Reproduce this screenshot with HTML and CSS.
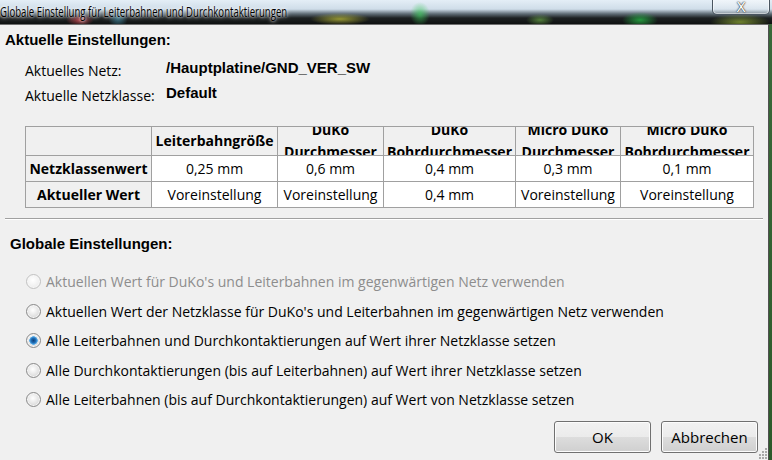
FILE: index.html
```html
<!DOCTYPE html>
<html lang="de">
<head>
    <meta charset="UTF-8">
    <title>Globale Einstellung für Leiterbahnen und Durchkontaktierungen</title>
    <link rel="stylesheet" href="styles.css">
</head>
<body>
    <div class="window">
        <!-- Titelleiste -->
        <div class="titlebar">
            <span class="title">Globale Einstellung für Leiterbahnen und Durchkontaktierungen</span>
            <div class="close-btn">X</div>
        </div>

        <div class="dialog">
            <h2 class="group-title">Aktuelle Einstellungen:</h2>

            <div class="info">
                <span class="info-label">Aktuelles Netz:</span>
                <span class="info-value">/Hauptplatine/GND_VER_SW</span>
                <span class="info-label">Aktuelle Netzklasse:</span>
                <span class="info-value">Default</span>
            </div>

            <table class="values">
                <colgroup>
                    <col style="width:126px">
                    <col style="width:126px">
                    <col style="width:106px">
                    <col style="width:132px">
                    <col style="width:105px">
                    <col style="width:133px">
                </colgroup>
                <tr class="head">
                    <th></th>
                    <th><div class="clip">Leiterbahngröße</div></th>
                    <th><div class="clip">DuKo<br>Durchmesser</div></th>
                    <th><div class="clip">DuKo<br>Bohrdurchmesser</div></th>
                    <th><div class="clip">Micro DuKo<br>Durchmesser</div></th>
                    <th><div class="clip">Micro DuKo<br>Bohrdurchmesser</div></th>
                </tr>
                <tr>
                    <th>Netzklassenwert</th>
                    <td>0,25 mm</td>
                    <td>0,6 mm</td>
                    <td>0,4 mm</td>
                    <td>0,3 mm</td>
                    <td>0,1 mm</td>
                </tr>
                <tr>
                    <th>Aktueller Wert</th>
                    <td>Voreinstellung</td>
                    <td>Voreinstellung</td>
                    <td>0,4 mm</td>
                    <td>Voreinstellung</td>
                    <td>Voreinstellung</td>
                </tr>
            </table>

            <div class="separator"></div>

            <h2 class="group-title global">Globale Einstellungen:</h2>

            <ul class="options">
                <li class="disabled"><span class="radio"></span>Aktuellen Wert für DuKo's und Leiterbahnen im gegenwärtigen Netz verwenden</li>
                <li><span class="radio"></span>Aktuellen Wert der Netzklasse für DuKo's und Leiterbahnen im gegenwärtigen Netz verwenden</li>
                <li><span class="radio checked"></span>Alle Leiterbahnen und Durchkontaktierungen auf Wert ihrer Netzklasse setzen</li>
                <li><span class="radio"></span>Alle Durchkontaktierungen (bis auf Leiterbahnen) auf Wert ihrer Netzklasse setzen</li>
                <li><span class="radio"></span>Alle Leiterbahnen (bis auf Durchkontaktierungen) auf Wert von Netzklasse setzen</li>
            </ul>

            <div class="buttons">
                <button class="btn">OK</button>
                <button class="btn">Abbrechen</button>
            </div>

            <svg class="grip" width="11" height="11" viewBox="0 0 11 11">
                <rect x="8" y="0" width="2" height="2" fill="#a8a8a8"/>
                <rect x="5" y="3" width="2" height="2" fill="#a8a8a8"/>
                <rect x="8" y="3" width="2" height="2" fill="#a8a8a8"/>
                <rect x="2" y="6" width="2" height="2" fill="#a8a8a8"/>
                <rect x="5" y="6" width="2" height="2" fill="#a8a8a8"/>
                <rect x="8" y="6" width="2" height="2" fill="#a8a8a8"/>
                <rect x="2" y="9" width="2" height="2" fill="#a8a8a8"/>
                <rect x="5" y="9" width="2" height="2" fill="#a8a8a8"/>
                <rect x="8" y="9" width="2" height="2" fill="#a8a8a8"/>
            </svg>
        </div>
    </div>
</body>
</html>
```

FILE: styles.css
```css
body {
    margin: 0;
    padding: 0;
    width: 772px;
    height: 460px;
    overflow: hidden;
    background: linear-gradient(#3a6a3a, #2d5a2a);
    font-family: "Open Sans", "Noto Sans", sans-serif;
    color: #000000;
}

.window {
    width: 772px;
    height: 460px;
    display: flex;
    flex-direction: column;
}

/* Aero-Titelleiste */
.titlebar {
    position: relative;
    height: 24px;
    flex: none;
    background:
        radial-gradient(ellipse 14px 6px at 80px 20px, rgba(210, 70, 80, 0.8), transparent),
        radial-gradient(ellipse 10px 10px at 118px 18px, rgba(80, 170, 200, 0.6), transparent),
        radial-gradient(ellipse 30px 6px at 340px 19px, rgba(200, 200, 60, 0.7), transparent),
        radial-gradient(ellipse 10px 12px at 420px 14px, rgba(60, 200, 90, 0.7), transparent),
        radial-gradient(ellipse 14px 6px at 540px 20px, rgba(120, 190, 80, 0.6), transparent),
        radial-gradient(ellipse 18px 8px at 640px 20px, rgba(40, 180, 70, 0.8), transparent),
        radial-gradient(ellipse 30px 8px at 740px 22px, rgba(170, 200, 60, 0.6), transparent),
        linear-gradient(#e4eef6 0, #cfdde9 38%, #5e6b74 58%, #1d2122 75%, #0f1211 100%);
}

.title {
    display: inline-block;
    font-family: "Open Sans", sans-serif;
    font-size: 15px;
    line-height: 18px;
    white-space: nowrap;
    transform: scaleX(0.64);
    transform-origin: left center;
    color: #000000;
    text-shadow: 0 0 6px #ffffff, 0 0 3px #ffffff;
}

.close-btn {
    position: absolute;
    right: 2px;
    top: -3px;
    width: 56px;
    height: 17px;
    border: 1px solid #4a5560;
    border-top: none;
    border-radius: 0 0 5px 5px;
    background: linear-gradient(rgba(255, 255, 255, 0.55), rgba(220, 230, 240, 0.3));
    box-shadow: inset 0 0 0 1px rgba(255, 255, 255, 0.5);
    text-align: center;
    font-family: "DejaVu Sans", sans-serif;
    font-size: 14px;
    line-height: 20px;
    color: #ffffff;
    text-shadow: 0 0 2px #333333, 0 0 1px #000000;
}

/* Dialoginhalt */
.dialog {
    position: relative;
    flex: 1;
    width: 768px;
    background-color: #f0f0f0;
    border-top: 1px solid #6f6f6f;
    border-right: 1px solid #505050;
}

.group-title {
    font-family: "Liberation Sans", Arial, sans-serif;
    font-weight: bold;
    font-size: 15px;
    margin: 0;
    padding: 6px 0 0 5px;
    line-height: 18px;
}

.info {
    display: grid;
    grid-template-columns: 141px auto;
    row-gap: 6px;
    margin: 12px 0 0 25px;
    align-items: center;
}

.info-label {
    font-size: 14px;
    line-height: 19px;
}

.info-value {
    font-family: "Liberation Sans", Arial, sans-serif;
    font-weight: bold;
    font-size: 15px;
    line-height: 19px;
    position: relative;
    top: -3px;
}

.values {
    border-collapse: collapse;
    table-layout: fixed;
    width: 728px;
    margin: 21px 0 0 25px;
    font-size: 14px;
}

.values th,
.values td {
    border: 1px solid #a0a0a0;
    padding: 0;
    text-align: center;
    white-space: nowrap;
    overflow: hidden;
}

.values th {
    font-weight: bold;
    background-color: #f0f0f0;
}

.values td {
    background-color: #ffffff;
    height: 25px;
}

.values tr .clip {
    height: 28px;
    line-height: 22px;
    display: flex;
    flex-direction: column;
    justify-content: center;
    overflow: hidden;
}

.separator {
    margin: 10px 5px 0 5px;
    border-top: 1px solid #a0a0a0;
    border-bottom: 1px solid #ffffff;
}

.group-title.global {
    padding: 15px 0 0 10px;
}

.options {
    list-style: none;
    margin: 14px 0 0 26px;
    padding: 0;
}

.options li {
    display: flex;
    align-items: center;
    height: 29.5px;
    font-size: 14px;
    white-space: nowrap;
}

.options li.disabled {
    color: #8d8d8d;
}

.radio {
    flex: none;
    width: 13px;
    height: 13px;
    margin-right: 5px;
    border: 1px solid #8a8a8a;
    border-radius: 50%;
    background: radial-gradient(circle at 45% 40%, #ffffff 0, #e8e8e8 45%, #c9c9c9 100%);
    box-shadow: inset 0 0 0 1px #f6f6f6;
}

.options li.disabled .radio {
    border-color: #c2c2c2;
    background: radial-gradient(circle at 45% 40%, #ffffff 0, #f0f0f0 60%, #e2e2e2 100%);
}

.radio.checked {
    background:
        radial-gradient(circle at 50% 50%, #0e3f78 0, #1f6fb8 2.5px, #5fb0ea 4px, transparent 4.5px),
        radial-gradient(circle at 45% 40%, #ffffff 0, #e8e8e8 45%, #c9c9c9 100%);
}

.buttons {
    position: absolute;
    right: 10px;
    bottom: 7px;
    display: flex;
    gap: 10px;
}

.btn {
    width: 97px;
    height: 32px;
    border: 1px solid #707070;
    border-radius: 3px;
    background: linear-gradient(#f2f2f2 0, #ebebeb 50%, #dddddd 50%, #cfcfcf 100%);
    box-shadow: inset 0 0 0 1px #fcfcfc;
    font-family: "Open Sans", sans-serif;
    font-size: 15px;
    color: #000000;
    padding: 0;
}

.grip {
    position: absolute;
    right: 0;
    bottom: 1px;
}
```
